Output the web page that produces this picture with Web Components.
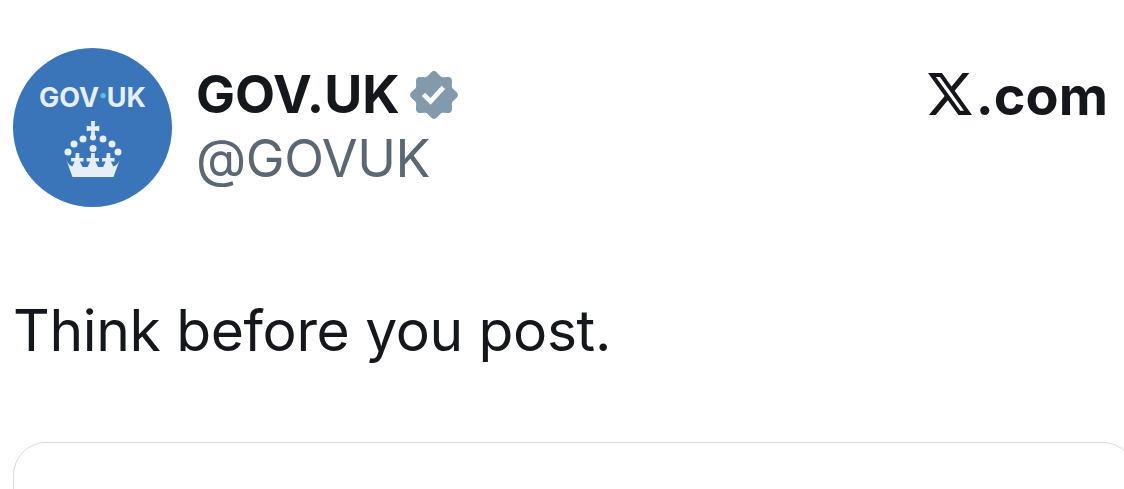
<!DOCTYPE html>
<html><head><meta charset="utf-8"><title>GOV.UK post</title>
<style>
html,body{margin:0;padding:0;background:#fff;overflow:hidden;width:1124px;height:489px}
</style></head><body>
<post-card>
  <post-header slot="header" name="GOV.UK" handle="@GOVUK"></post-header>
  <span slot="text">Think before you post.</span>
</post-card>
<script>
class GovAvatar extends HTMLElement{constructor(){super();
const fleur=x=>`<path d="M${x-1.8} 32h3.600v5h4.200v3.400h-3.600l2.600 5.600h-10.400l2.600-5.600h-3.600v-3.400h4.200z"/>`;
this.attachShadow({mode:'open'}).innerHTML=`<style>
:host{display:flex;flex-direction:column;align-items:center;width:159px;height:159px;border-radius:50%;background:#3a74b9;flex:none;box-sizing:border-box;padding-top:33px;color:#e6eff7;font:700 27px/30px Inter,sans-serif}
.t{display:flex;align-items:baseline;white-space:nowrap}.d{color:#4fc3dc;font-size:32px;margin:0 -1.500px}
svg{display:block;width:60px;height:58px;margin-top:8px}
</style><div class="t"><span>GOV</span><span class="d">·</span><span>UK</span></div>
<svg viewBox="0 0 60 58" fill="#e6eff7">
<path d="M28 0h4l-.3 5.500 4.600-.7v5.400l-4.600-.7.300 5h-4l.3-5-4.600.7V4.800l4.600.7z"/>
<circle cx="30" cy="16.500" r="3"/>
<circle cx="20" cy="18" r="3.500"/><circle cx="40" cy="18" r="3.500"/>
<circle cx="11" cy="23" r="3.500"/><circle cx="49" cy="23" r="3.500"/>
<circle cx="5" cy="31" r="3.500"/><circle cx="55" cy="31" r="3.500"/>
<circle cx="30" cy="27.500" r="3.500"/>
${fleur(14.5)}${fleur(30)}${fleur(45.5)}
<path d="M3 38c2 5 4 7 8 8h38c4-1 6-3 8-8l-6.500 18h-41z"/>
</svg>`}}
customElements.define('gov-avatar',GovAvatar);

class VerifiedBadge extends HTMLElement{constructor(){super();this.attachShadow({mode:'open'}).innerHTML=`<style>
:host{display:block;width:56px;height:56px;flex:none}svg{display:block;width:100%;height:100%}
</style><svg viewBox="0 0 22 22"><path fill="#829aab" fill-rule="evenodd" clip-rule="evenodd" d="M12.05 2.056c-.568-.608-1.532-.608-2.1 0l-1.393 1.49c-.284.303-.685.47-1.1.455L5.42 3.932c-.832-.028-1.514.654-1.486 1.486l.069 2.039c.014.415-.152.816-.456 1.1l-1.49 1.392c-.608.568-.608 1.533 0 2.101l1.49 1.393c.304.284.47.684.456 1.1l-.07 2.038c-.027.832.655 1.514 1.487 1.486l2.038-.069c.415-.014.816.152 1.1.455l1.392 1.49c.569.609 1.533.609 2.102 0l1.393-1.49c.283-.303.684-.47 1.099-.455l2.038.069c.832.028 1.515-.654 1.486-1.486L18 14.542c-.015-.415.152-.815.455-1.099l1.49-1.393c.608-.568.608-1.533 0-2.101l-1.49-1.393c-.303-.283-.47-.684-.455-1.1l.068-2.038c.029-.832-.654-1.514-1.486-1.486l-2.038.07c-.415.013-.816-.153-1.1-.456zm-5.817 9.367l3.429 3.428 5.683-6.206-1.347-1.247-4.4 4.795-2.072-2.072z"/></svg>`}}
customElements.define('verified-badge',VerifiedBadge);

class XBrand extends HTMLElement{constructor(){super();this.attachShadow({mode:'open'}).innerHTML=`<style>
:host{display:flex;align-items:flex-end;color:#14171c;font:700 54px/60px Inter,sans-serif;flex:none;gap:4px}
svg{display:block;width:44px;height:42px;margin-bottom:11px}
</style><svg viewBox="1.25 2.25 21.57 19.5" preserveAspectRatio="none"><path fill="#14171c" d="M18.244 2.25h3.308l-7.227 8.26 8.502 11.24H16.17l-5.214-6.817L4.99 21.75H1.68l7.73-8.835L1.254 2.25H8.08l4.713 6.231zm-1.161 17.52h1.833L7.084 4.126H5.117z"/></svg><span>.com</span>`}}
customElements.define('x-brand',XBrand);

class PostHeader extends HTMLElement{constructor(){super();this.attachShadow({mode:'open'}).innerHTML=`<style>
:host{display:flex;align-items:flex-start}
.who{flex:1;padding:16px 0 0 24px}
.name{display:flex;align-items:center;gap:6px;color:#14171c;font:700 52px/62px Inter,sans-serif}
.handle{margin-top:2px;color:#5b6873;font:400 52px/62px Inter,sans-serif;letter-spacing:-.4px}
x-brand{margin:18px 16px 0 0}
</style><gov-avatar></gov-avatar><div class="who"><div class="name"><span>${this.getAttribute('name')}</span><verified-badge></verified-badge></div><div class="handle">${this.getAttribute('handle')}</div></div><x-brand></x-brand>`}}
customElements.define('post-header',PostHeader);

class PostCard extends HTMLElement{constructor(){super();this.attachShadow({mode:'open'}).innerHTML=`<style>
:host{display:flex;flex-direction:column;height:489px;box-sizing:border-box;padding:48px 0 0 13px;overflow:hidden}
.text{margin-top:88px;color:#14171c;font:400 57px/72px Inter,sans-serif;letter-spacing:-.36px}
.media{margin-top:75px;height:100px;margin-right:-12px;border:1px solid #d9d9d9;border-radius:33px;flex:none}
</style><slot name="header"></slot><div class="text"><slot name="text"></slot></div><div class="media"></div>`}}
customElements.define('post-card',PostCard);
</script>
</body></html>
